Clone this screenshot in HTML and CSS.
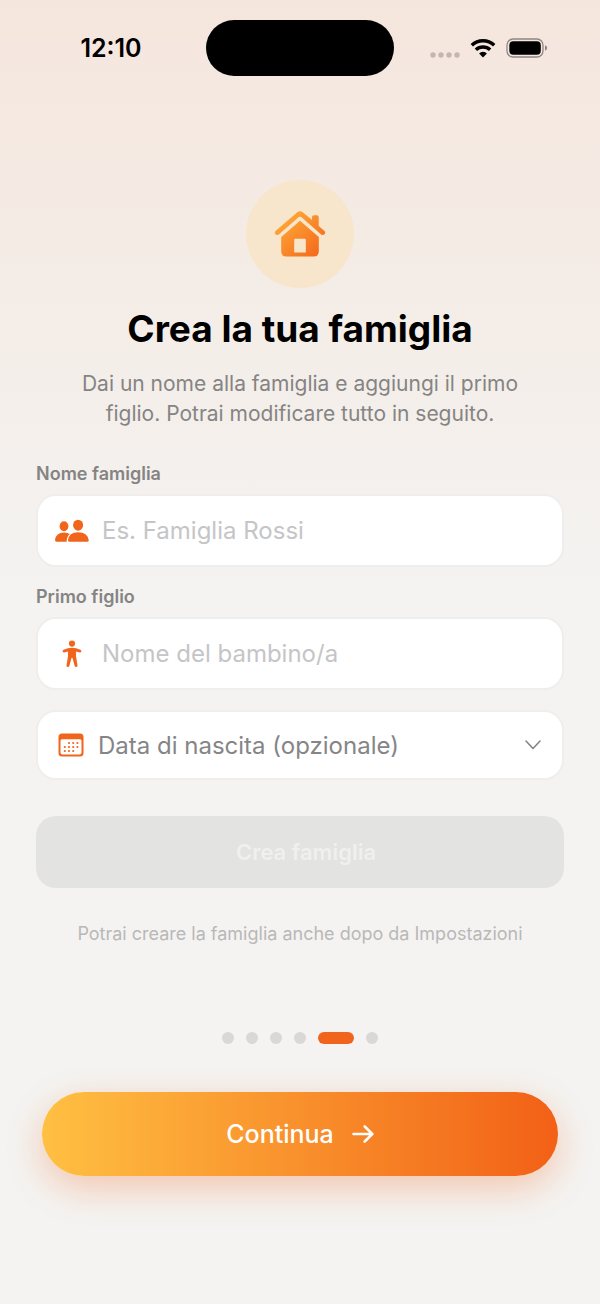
FILE: index.html
```html
<!DOCTYPE html>
<html lang="it">
<head>
  <meta charset="UTF-8">
  <meta name="viewport" content="width=device-width, initial-scale=1">
  <title>Crea la tua famiglia</title>
  <link rel="stylesheet" href="styles.css">
</head>
<body>

  <header class="status-bar">
    <span class="time">12:10</span>
    <span class="island"></span>
    <div class="status-icons">
      <svg class="signal" width="30" height="6" viewBox="0 0 30 6" fill="#c2b8b1">
        <circle cx="3" cy="3" r="2.7"/><circle cx="11" cy="3" r="2.7"/><circle cx="19" cy="3" r="2.7"/><circle cx="27" cy="3" r="2.7"/>
      </svg>
      <svg width="26" height="20" viewBox="0 0 26 20" fill="none" stroke="#000" stroke-width="3.4">
        <path d="M1.8 7.2a16.2 16.2 0 0 1 22.4 0"/>
        <path d="M5.9 11.8a10.3 10.3 0 0 1 14.2 0"/>
        <path d="M13 19.4l-3.9-4a5.6 5.6 0 0 1 7.8 0z" fill="#000" stroke="none"/>
      </svg>
      <svg width="42" height="20" viewBox="0 0 42 20">
        <rect x="1" y="1" width="36" height="18" rx="6" fill="none" stroke="#8f8781" stroke-width="1.3"/>
        <rect x="3.3" y="3.3" width="31.5" height="13.4" rx="4" fill="#000"/>
        <path d="M39 7.3q2.2.8 2.2 2.7t-2.2 2.7z" fill="#8f8781"/>
      </svg>
    </div>
  </header>

  <main class="content">
    <div class="hero">
      <svg width="52" height="46" viewBox="0 0 52 46">
        <defs>
          <linearGradient id="houseFill" gradientUnits="userSpaceOnUse" x1="4" y1="2" x2="46" y2="46">
            <stop offset="0" stop-color="#ffb13b"/>
            <stop offset="1" stop-color="#f4661c"/>
          </linearGradient>
        </defs>
        <g fill="url(#houseFill)">
          <path d="M23 1.4Q26 -.9 29 1.4L38 9.1V6.2Q38 4.3 39.9 4.3H42.8Q44.7 4.3 44.7 6.2V14.9L50.3 19.7Q51.9 21.4 50.7 23Q49.1 24.7 47.2 23.4L27.2 6.1Q26 5.2 24.8 6.1L4.8 23.4Q2.9 24.7 1.3 23Q.1 21.4 1.7 19.7Z"/>
          <path fill-rule="evenodd" d="M26 9.8L44.8 26V40.5Q44.8 45.5 39.8 45.5H12.2Q7.2 45.5 7.2 40.5V26ZM21.3 27.7Q20.2 27.7 20.2 28.8V41.4H31.8V28.8Q31.8 27.7 30.7 27.7Z"/>
        </g>
      </svg>
    </div>

    <h1 class="title">Crea la tua famiglia</h1>
    <p class="subtitle">Dai un nome alla famiglia e aggiungi il primo figlio. Potrai modificare tutto in seguito.</p>

    <form class="family-form">
      <label class="label" for="familyName">Nome famiglia</label>
      <div class="field">
        <svg width="36" height="24" viewBox="0 0 36 24" fill="#f1641b">
          <ellipse cx="10" cy="7.2" rx="4.4" ry="5"/>
          <path d="M1 21Q2 13.8 10 13.6Q13.5 13.6 15.8 15.1Q12.7 17.6 12.6 22.8H2.6Q1 22.8 1 21Z"/>
          <ellipse cx="24.1" cy="6.2" rx="5" ry="5.5"/>
          <path d="M14 21.2Q14.8 13.5 24.1 13.3Q33.6 13.5 34.7 21.2Q34.7 22.8 33 22.8H15.7Q14 22.8 14 21.2Z"/>
        </svg>
        <input type="text" id="familyName" placeholder="Es. Famiglia Rossi">
      </div>

      <label class="label" for="childName">Primo figlio</label>
      <div class="field">
        <svg width="36" height="28" viewBox="0 0 36 28" fill="#f1641b">
          <circle cx="18" cy="3.6" r="3.1"/>
          <path d="M9.6 9.7Q14 7.8 18 7.8T26.4 9.7Q27.9 10.6 27.3 11.8Q26.6 12.9 25 12.3L22 11.4V16.2L23.5 25.2Q23.7 26.8 22.3 27Q21 27.1 20.6 25.8L18.6 18.2Q18 17.2 17.4 18.2L15.4 25.8Q15 27.1 13.7 27Q12.3 26.8 12.5 25.2L14 16.2V11.4L11 12.3Q9.4 12.9 8.7 11.8Q8.1 10.6 9.6 9.7Z"/>
        </svg>
        <input type="text" id="childName" placeholder="Nome del bambino/a">
      </div>

      <button type="button" class="field date-field">
        <svg width="26" height="24" viewBox="0 0 26 24" fill="#f1641b">
          <path fill-rule="evenodd" d="M4 .5H22Q25.5 .5 25.5 4V20Q25.5 23.5 22 23.5H4Q.5 23.5 .5 20V4Q.5 .5 4 .5ZM4 6.3Q2.5 6.3 2.5 7.8V19.7Q2.5 21.5 4.3 21.5H21.7Q23.5 21.5 23.5 19.7V7.8Q23.5 6.3 22 6.3Z"/>
          <g>
            <circle cx="11" cy="10" r="1.1"/><circle cx="15.2" cy="10" r="1.1"/><circle cx="19.4" cy="10" r="1.1"/>
            <circle cx="6.8" cy="14" r="1.1"/><circle cx="11" cy="14" r="1.1"/><circle cx="15.2" cy="14" r="1.1"/><circle cx="19.4" cy="14" r="1.1"/>
            <circle cx="6.8" cy="18" r="1.1"/><circle cx="11" cy="18" r="1.1"/><circle cx="15.2" cy="18" r="1.1"/>
          </g>
        </svg>
        <span class="date-text">Data di nascita (opzionale)</span>
        <svg width="18" height="12" viewBox="0 0 18 12" fill="none" stroke="#858587" stroke-width="1.6" stroke-linecap="round" stroke-linejoin="round">
          <path d="M2 2l7 7.5L16 2"/>
        </svg>
      </button>

      <button type="submit" class="create-btn" disabled>Crea famiglia</button>
    </form>

    <p class="note">Potrai creare la famiglia anche dopo da Impostazioni</p>
  </main>

  <footer class="bottom">
    <div class="dots">
      <span class="dot"></span>
      <span class="dot"></span>
      <span class="dot"></span>
      <span class="dot"></span>
      <span class="dot active"></span>
      <span class="dot"></span>
    </div>
    <button type="button" class="continue-btn">
      Continua
      <svg width="22" height="20" viewBox="0 0 22 20" fill="none" stroke="#fff" stroke-width="2.6" stroke-linecap="round" stroke-linejoin="round">
        <path d="M1.5 10H20M12.7 2.5L20.3 10l-7.6 7.5"/>
      </svg>
    </button>
  </footer>

</body>
</html>
```
FILE: styles.css
```css
* {
  box-sizing: border-box;
}

body {
  margin: 0;
  min-height: 100vh;
  font-family: Inter, "Liberation Sans", sans-serif;
  background: linear-gradient(180deg, #f5e6dd 0%, #f4ede8 25%, #f4f3f1 45%, #f4f3f1 100%);
  color: #000;
}

button,
input {
  font-family: inherit;
}

svg {
  display: block;
  flex-shrink: 0;
}

.status-bar {
  display: grid;
  grid-template-columns: 1fr 188px 1fr;
  align-items: center;
  padding-top: 20px;
}

.time {
  padding-left: 16px;
  font-size: 25px;
  font-weight: 600;
  text-align: center;
}

.island {
  height: 56px;
  border-radius: 28px;
  background: #000;
}

.status-icons {
  display: flex;
  align-items: center;
  gap: 10px;
  padding-left: 36px;
}

.signal {
  margin-top: 14px;
}

.content {
  padding: 104px 36px 0;
}

.hero {
  display: flex;
  align-items: center;
  justify-content: center;
  width: 108px;
  height: 108px;
  margin: 0 auto;
  border-radius: 50%;
  background: #f7e6cc;
}

.title {
  margin: 17px 0 0;
  font-size: 37px;
  font-weight: 700;
  line-height: 48px;
  text-align: center;
}

.subtitle {
  max-width: 470px;
  margin: 16px auto 0;
  font-size: 21px;
  line-height: 30px;
  color: #858483;
  text-align: center;
}

.family-form {
  display: flex;
  flex-direction: column;
  margin-top: 33px;
}

.label {
  margin-bottom: 8px;
  font-size: 18px;
  font-weight: 600;
  line-height: 24px;
  color: #858483;
}

.field {
  display: flex;
  align-items: center;
  gap: 12px;
  height: 73px;
  margin-bottom: 18px;
  padding: 0 16px;
  border: 2px solid #efeeed;
  border-radius: 20px;
  background: #fff;
}

.field input {
  flex: 1;
  min-width: 0;
  padding: 0;
  border: none;
  outline: none;
  background: none;
  font-size: 24px;
  color: #000;
}

.field input::placeholder {
  color: #c5c5c7;
}

.date-field {
  gap: 14px;
  height: 70px;
  margin-top: 2px;
  padding: 0 20px;
  cursor: pointer;
}

.date-text {
  flex: 1;
  font-size: 24px;
  color: #858587;
  text-align: left;
}

.create-btn {
  height: 72px;
  margin-top: 18px;
  padding: 0 0 0 12px;
  border: none;
  border-radius: 20px;
  background: #e3e3e1;
  color: #f0f0ee;
  font-size: 22px;
  font-weight: 600;
}

.note {
  margin: 34px 0 0;
  font-size: 18px;
  line-height: 24px;
  color: #b9b8b8;
  text-align: center;
}

.bottom {
  padding: 86px 42px 0;
}

.dots {
  display: flex;
  justify-content: center;
  gap: 12px;
}

.dot {
  width: 12px;
  height: 12px;
  border-radius: 6px;
  background: #d9d8d7;
}

.dot.active {
  width: 36px;
  background: #f1641b;
}

.continue-btn {
  display: flex;
  align-items: center;
  justify-content: center;
  gap: 18px;
  width: 100%;
  height: 84px;
  margin-top: 48px;
  border: none;
  border-radius: 42px;
  background: linear-gradient(90deg, #ffc042, #f26016);
  box-shadow: 0 12px 36px rgba(242, 96, 22, 0.3);
  color: #fff;
  font-size: 25px;
  font-weight: 500;
  cursor: pointer;
}
```
